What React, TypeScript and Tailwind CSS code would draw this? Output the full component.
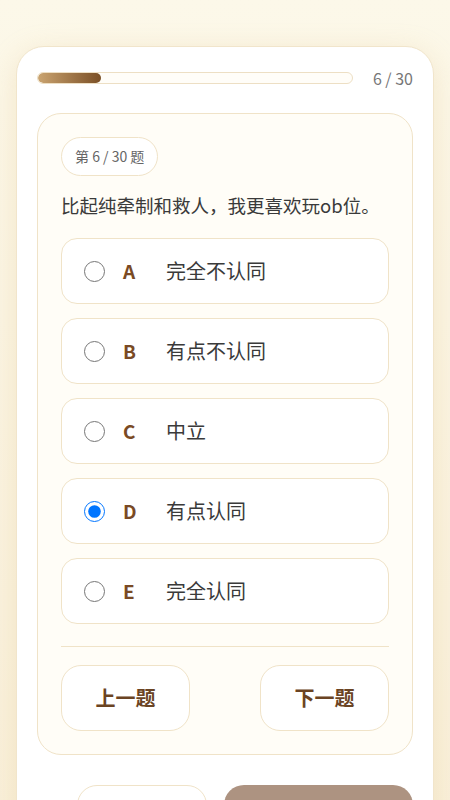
import { useState } from "react";

const options = [
  { key: "A", label: "完全不认同" },
  { key: "B", label: "有点不认同" },
  { key: "C", label: "中立" },
  { key: "D", label: "有点认同" },
  { key: "E", label: "完全认同" },
];

export default function App() {
  const [picked, setPicked] = useState("D");
  const current = 6;
  const total = 30;

  return (
    <div
      className="min-h-screen bg-gradient-to-b from-[#fcf8e9] to-[#f9efd8] px-4 pt-[46px] pb-10"
      style={{ fontFamily: '"Noto Sans CJK SC", "Noto Sans", sans-serif' }}
    >
      <div className="rounded-[28px] border border-[#f1e5cb] bg-white px-5 pt-[19px] pb-6 shadow-[0_6px_28px_rgba(222,190,130,0.28)]">
        {/* progress */}
        <div className="flex items-center gap-5">
          <div className="h-3 flex-1 overflow-hidden rounded-full border border-[#eddfc4] bg-[#fffdf8]">
            <div
              className="h-full rounded-full bg-gradient-to-r from-[#caa470] to-[#7b5026]"
              style={{ width: `${(current / total) * 100}%` }}
            />
          </div>
          <span className="text-[16px] leading-6 text-[#777]">
            {current} / {total}
          </span>
        </div>

        {/* question card */}
        <div className="mt-[23px] rounded-[24px] border border-[#f0e3c8] bg-[#fffdf7] px-[23px] pt-[23px] pb-[23px]">
          <div className="inline-flex h-[39px] items-center rounded-full border border-[#f0e3c8] bg-white px-[13px] text-[14px] text-[#666]">
            第 {current} / {total} 题
          </div>

          <p className="mt-[15px] text-[18.5px] leading-7 text-[#3a3a3a]">
            比起纯牵制和救人，我更喜欢玩ob位。
          </p>

          <div className="mt-[19px] flex flex-col gap-[14px]">
            {options.map((o) => (
              <label
                key={o.key}
                className="flex h-[66px] cursor-pointer items-center rounded-[16px] border border-[#f0e3c8] bg-white pl-[22px]"
              >
                <input
                  type="radio"
                  name="answer"
                  checked={picked === o.key}
                  onChange={() => setPicked(o.key)}
                  className="m-0 h-[21px] w-[21px]"
                />
                <span className="ml-[18px] w-[43px] text-[19px] font-bold text-[#7a4a24]">
                  {o.key}
                </span>
                <span className="text-[20px] text-[#3a3a3a]">{o.label}</span>
              </label>
            ))}
          </div>

          <div className="mt-[22px] h-px bg-[#f0e3c8]" />

          <div className="mt-[18px] flex justify-between">
            <button className="h-[66px] w-[129px] rounded-[20px] border border-[#f0e3c8] bg-white text-[20px] font-bold text-[#6b4423]">
              上一题
            </button>
            <button className="h-[66px] w-[129px] rounded-[20px] border border-[#f0e3c8] bg-white text-[20px] font-bold text-[#6b4423]">
              下一题
            </button>
          </div>
        </div>

        {/* footer actions */}
        <div className="mt-[30px] flex justify-end gap-[17px]">
          <button className="h-[70px] w-[130px] rounded-[20px] border border-[#f0e3c8] bg-white text-[18px] font-bold text-[#6b4423]">
            重新开始
          </button>
          <button className="h-[70px] w-[189px] rounded-[20px] bg-[#ad9381] text-[18px] font-bold text-white">
            查看结果
          </button>
        </div>
      </div>
    </div>
  );
}
